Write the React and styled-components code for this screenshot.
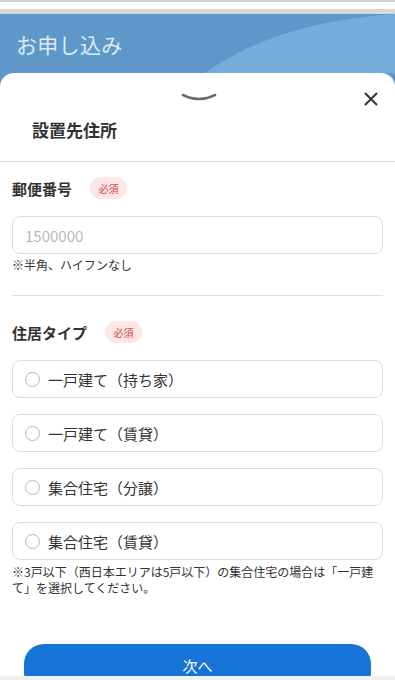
import React, { useState } from "react";
import styled, { createGlobalStyle } from "styled-components";

const GlobalStyle = createGlobalStyle`
  html, body {
    margin: 0;
    padding: 0;
    background: #ffffff;
  }
  body {
    font-family: "Noto Sans CJK JP", "Noto Sans", sans-serif;
    color: #333333;
  }
  * {
    box-sizing: border-box;
  }
`;

const Screen = styled.div`
  width: 395px;
  height: 680px;
  display: flex;
  flex-direction: column;
  overflow: hidden;
  background: #5e98c8;
`;

const TopStrip = styled.div`
  height: 14px;
  flex-shrink: 0;
  background: #ffffff;
  border-top: 2px solid #c9d1d9;
  border-bottom: 5px solid #d6d8db;
`;

const Header = styled.header`
  position: relative;
  height: 59px;
  flex-shrink: 0;
  display: flex;
  align-items: center;
  padding: 0 16px 0;
  overflow: hidden;
`;

const HeaderWave = styled.svg`
  position: absolute;
  inset: 0;
  width: 100%;
  height: 100%;
`;

const PageTitle = styled.h1`
  position: relative;
  margin: 0;
  font-size: 21px;
  font-weight: 400;
  color: #dfe9f3;
  letter-spacing: 0.3px;
`;

const Sheet = styled.section`
  flex: 1;
  min-height: 0;
  background: #ffffff;
  border-radius: 14px 14px 0 0;
  overflow: hidden;
`;

const SheetHead = styled.div`
  position: relative;
  padding: 19px 0 19px;
  border-bottom: 1px solid #dddddd;
  display: flex;
  flex-direction: column;
`;

const Handle = styled.svg`
  align-self: center;
  width: 36px;
  height: 10px;
  margin-left: 2px;
`;

const CloseButton = styled.button`
  position: absolute;
  top: 18px;
  right: 16px;
  width: 16px;
  height: 16px;
  padding: 0;
  border: none;
  background: none;
  display: flex;
  align-items: center;
  justify-content: center;
`;

const SheetTitle = styled.h2`
  margin: 16px 0 0;
  padding-left: 32px;
  font-size: 17px;
  line-height: 24px;
  font-weight: 700;
  color: #333333;
`;

const Body = styled.div`
  padding: 0 12px;
`;

const Section = styled.div`
  padding-top: ${(p) => p.top}px;
  padding-bottom: ${(p) => p.bottom}px;
  border-bottom: ${(p) => (p.divided ? "1px solid #dddddd" : "none")};
`;

const LabelRow = styled.div`
  display: flex;
  align-items: center;
  gap: 18px;
  height: 24px;
`;

const Label = styled.span`
  font-size: 15px;
  font-weight: 700;
  color: #333333;
`;

const Badge = styled.span`
  display: inline-flex;
  align-items: center;
  justify-content: center;
  width: 37px;
  height: 22px;
  border-radius: 11px;
  background: #fde6e6;
  color: #d64545;
  font-size: 10px;
`;

const TextInput = styled.input`
  display: block;
  width: 100%;
  height: 38px;
  margin-top: 16px;
  padding: 0 12px;
  border: 1px solid #dcdcdc;
  border-radius: 8px;
  font-family: inherit;
  font-size: 15px;
  color: #333333;
  outline: none;
  &::placeholder {
    color: #b8b8b8;
  }
`;

const Hint = styled.p`
  margin: 2px 0 0;
  font-size: 12px;
  line-height: 18px;
  color: #333333;
`;

const OptionList = styled.div`
  display: flex;
  flex-direction: column;
  gap: 16px;
  margin-top: 16px;
`;

const Option = styled.label`
  display: flex;
  align-items: center;
  gap: 8px;
  height: 38px;
  padding: 0 12px;
  border: 1px solid #dcdcdc;
  border-radius: 8px;
  font-size: 15px;
  color: #333333;
  cursor: pointer;
`;

const RadioDot = styled.span`
  width: 15px;
  height: 15px;
  border-radius: 50%;
  border: 1px solid ${(p) => (p.checked ? "#1574d6" : "#b5b5b5")};
  box-shadow: ${(p) => (p.checked ? "inset 0 0 0 3px #fff, inset 0 0 0 8px #1574d6" : "none")};
  flex-shrink: 0;
`;

const Note = styled.p`
  margin: 4px 0 0;
  font-size: 12px;
  line-height: 16px;
  color: #333333;
`;

const NextButton = styled.button`
  display: block;
  width: 347px;
  height: 48px;
  margin: 48px auto 0;
  padding: 0 0 6px;
  border: none;
  border-radius: 20px;
  background: #1574d6;
  color: #ffffff;
  font-family: inherit;
  font-size: 15px;
`;

const BottomStrip = styled.div`
  height: 4px;
  flex-shrink: 0;
  background: #eef0f2;
`;

const options = [
  "一戸建て（持ち家）",
  "一戸建て（賃貸）",
  "集合住宅（分譲）",
  "集合住宅（賃貸）",
];

export default function App() {
  const [selected, setSelected] = useState(null);

  return (
    <>
      <GlobalStyle />
      <Screen>
        <TopStrip />
        <Header>
          <HeaderWave viewBox="0 0 395 59" preserveAspectRatio="none">
            <path d="M205 59 C 245 30, 310 4, 400 0 L400 59 Z" fill="#74acdb" />
          </HeaderWave>
          <PageTitle>お申し込み</PageTitle>
        </Header>
        <Sheet>
          <SheetHead>
            <Handle viewBox="0 0 36 10">
              <path
                d="M2 3 Q 18 11 34 3"
                fill="none"
                stroke="#6b6b6b"
                strokeWidth="2.6"
                strokeLinecap="round"
              />
            </Handle>
            <CloseButton aria-label="閉じる">
              <svg width="14" height="14" viewBox="0 0 14 14">
                <path
                  d="M1.5 1.5 L12.5 12.5 M12.5 1.5 L1.5 12.5"
                  stroke="#333"
                  strokeWidth="2"
                  strokeLinecap="round"
                />
              </svg>
            </CloseButton>
            <SheetTitle>設置先住所</SheetTitle>
          </SheetHead>
          <Body>
            <Section top={14} bottom={21} divided>
              <LabelRow>
                <Label>郵便番号</Label>
                <Badge>必須</Badge>
              </LabelRow>
              <TextInput placeholder="1500000" inputMode="numeric" />
              <Hint>※半角、ハイフンなし</Hint>
            </Section>
            <Section top={24} bottom={0}>
              <LabelRow>
                <Label>住居タイプ</Label>
                <Badge>必須</Badge>
              </LabelRow>
              <OptionList>
                {options.map((o) => (
                  <Option key={o} onClick={() => setSelected(o)}>
                    <RadioDot checked={selected === o} />
                    {o}
                  </Option>
                ))}
              </OptionList>
              <Note>
                ※3戸以下（西日本エリアは5戸以下）の集合住宅の場合は「一戸建て」を選択してください。
              </Note>
            </Section>
            <NextButton>次へ</NextButton>
          </Body>
        </Sheet>
        <BottomStrip />
      </Screen>
    </>
  );
}
